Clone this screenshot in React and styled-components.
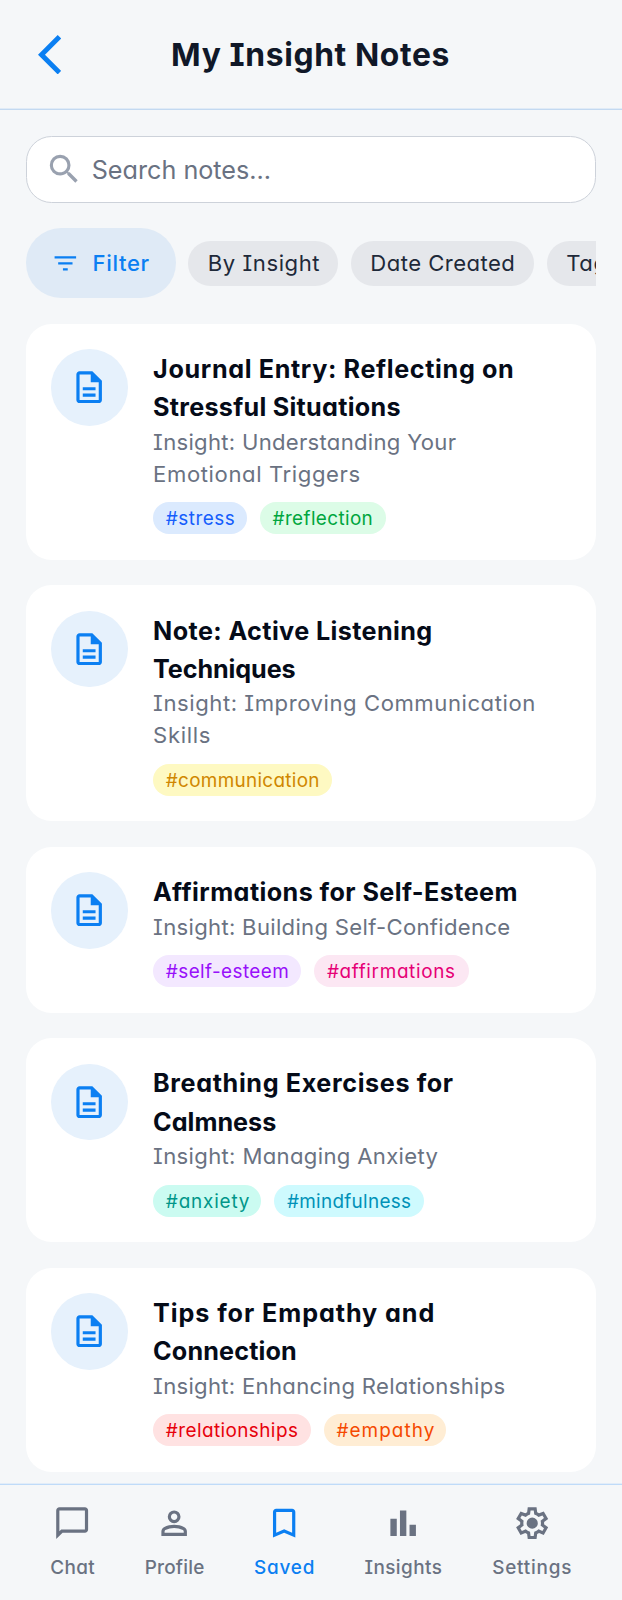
import React from "react";
import styled, { createGlobalStyle } from "styled-components";

const GlobalStyle = createGlobalStyle`
  *, *::before, *::after { box-sizing: border-box; }
  body {
    margin: 0;
    background: #f5f7f9;
    font-family: Inter, "Liberation Sans", sans-serif;
    font-feature-settings: "cv11", "cv08";
    color: #101828;
  }
  h1, h2, p { margin: 0; }
  button { font: inherit; font-feature-settings: inherit; border: 0; cursor: pointer; }
`;

const Screen = styled.div`
  display: flex;
  flex-direction: column;
  height: 1600px;
  overflow: hidden;
`;

const Header = styled.header`
  display: grid;
  grid-template-columns: 64px 1fr 64px;
  align-items: center;
  flex: none;
  height: 110px;
  padding: 0 25.6px;
  border-bottom: 1px solid #c3d9f1;
  box-shadow: inset 0 -1px #e0ebf7;
`;

const BackButton = styled.button`
  display: flex;
  padding: 0 0 0 12.4px;
  background: none;
  color: #0b7ff2;
`;

const ScreenTitle = styled.h1`
  padding-right: 1px;
  font-size: 31.8px;
  font-weight: 700;
  line-height: 40px;
  letter-spacing: 0.62px;
  text-align: center;
  white-space: nowrap;
`;

const Main = styled.main`
  flex: 1;
  min-height: 0;
  overflow: hidden;
  padding: 25.7px 26px 0;
`;

const SearchBox = styled.div`
  display: flex;
  align-items: center;
  gap: 8.6px;
  height: 67px;
  padding: 0 0 0 17.8px;
  border: 1px solid #cdd2da;
  border-radius: 25.5px;
  background: #fff;
  color: #99a1af;
`;

const SearchInput = styled.input`
  flex: 1;
  min-width: 0;
  padding: 1px 0 0;
  border: 0;
  outline: 0;
  background: none;
  font: 400 25.2px Inter, sans-serif;
  font-feature-settings: inherit;
  letter-spacing: 0px;
  color: #6a7282;
  &::placeholder { color: #6a7282; opacity: 1; }
`;

const FilterRow = styled.div`
  display: flex;
  align-items: center;
  gap: 12.75px;
  margin: 25.5px 0;
  overflow: hidden;
`;

const FilterButton = styled.button`
  display: flex;
  align-items: center;
  justify-content: flex-start;
  flex: none;
  gap: 12.9px;
  width: 149.6px;
  height: 70.2px;
  padding: 0 0 0 25px;
  border-radius: 35.1px;
  background: #dfeaf6;
  color: #0b7ff2;
  font-size: 22.1px;
  font-weight: 500;
  letter-spacing: 0.65px;
`;

const Chip = styled.button`
  flex: none;
  width: ${(p) => p.$width}px;
  height: 44.6px;
  padding: 0 0 0 19.3px;
  border-radius: 22.3px;
  background: #e5e7eb;
  color: #1e2939;
  font-size: 22.1px;
  font-weight: 400;
  letter-spacing: ${(p) => p.$track - 0.32}px;
  text-align: left;
  white-space: nowrap;
`;

const NoteList = styled.div`
  display: flex;
  flex-direction: column;
  gap: 25.5px;
`;

const Card = styled.article`
  display: flex;
  align-items: flex-start;
  flex: none;
  gap: 25.6px;
  padding: 25.5px 25px;
  border-radius: 25.5px;
  background: #fff;
`;

const IconCircle = styled.div`
  display: flex;
  align-items: center;
  justify-content: center;
  flex: none;
  width: 76.5px;
  height: 76.5px;
  border-radius: 50%;
  background: #e6f1fc;
  color: #0b7ff2;
`;

const NoteBody = styled.div`
  flex: 1;
  min-width: 0;
`;

const NoteTitle = styled.h2`
  padding-top: 0.8px;
  font-size: 25.2px;
  font-weight: 700;
  line-height: 38.28px;
  color: #050b18;
`;

const NoteInsight = styled.p`
  padding-top: 0.2px;
  font-size: 22.1px;
  line-height: 31.9px;
  color: #6a7282;
`;

const Line = styled.span`
  display: block;
  white-space: nowrap;
  letter-spacing: ${(p) => p.$track - 0.31}px;
`;

const TagRow = styled.div`
  display: flex;
  gap: 12.75px;
  margin-top: 11.75px;
`;

const tones = {
  blue: ["#dbeafe", "#155dfc"],
  green: ["#dcfce7", "#00a63e"],
  yellow: ["#fef9c2", "#d08700"],
  purple: ["#f3e8ff", "#9810fa"],
  pink: ["#fce7f3", "#e60076"],
  teal: ["#cbfbf1", "#009689"],
  cyan: ["#cefafe", "#0092b8"],
  red: ["#ffe2e2", "#e7000b"],
  orange: ["#ffedd4", "#f54900"],
};

const Tag = styled.span`
  width: ${(p) => p.$width}px;
  height: 31.9px;
  padding-left: 12.75px;
  border-radius: 16px;
  background: ${(p) => tones[p.$tone][0]};
  color: ${(p) => tones[p.$tone][1]};
  font-size: 18.9px;
  line-height: 33px;
  letter-spacing: ${(p) => p.$track - 0.36}px;
  white-space: nowrap;
`;

const NavBar = styled.nav`
  display: flex;
  align-items: flex-start;
  justify-content: space-between;
  flex: none;
  height: 116px;
  padding: 19px 49.9px 0 50px;
  border-top: 1px solid #bfdbf9;
  box-shadow: 0 -1px #e2edf9;
  background: #f5f7f9;
`;

const NavItem = styled.a`
  display: flex;
  flex-direction: column;
  align-items: center;
  gap: 13px;
  width: ${(p) => p.$width}px;
  color: ${(p) => (p.$active ? "#0b7ff2" : "#6a7282")};
`;

const NavLabel = styled.span`
  padding-left: 0.6px;
  font-size: 18.9px;
  font-weight: 500;
  line-height: 25.5px;
  letter-spacing: ${(p) => p.$track - 0.42}px;
  white-space: nowrap;
`;

const paths = {
  search: "M15.5 14h-.79l-.28-.27A6.471 6.471 0 0 0 16 9.5 6.5 6.5 0 1 0 9.5 16c1.61 0 3.09-.59 4.23-1.57l.27.28v.79l5 4.99L20.49 19l-4.99-5zm-6 0C7.01 14 5 11.99 5 9.5S7.01 5 9.5 5 14 7.01 14 9.5 11.99 14 9.5 14z",
  filter: "M10 18v-2h4v2zm-4-5v-2h12v2zM3 8V6h18v2z",
  note: "M8 18h8v-2H8zm0-4h8v-2H8zm-2 8q-.825 0-1.412-.587T4 20V4q0-.825.588-1.412T6 2h8l6 6v12q0 .825-.587 1.413T18 22zm7-13V4H6v16h12V9z",
  chat: "M2 22V4q0-.825.588-1.412T4 2h16q.825 0 1.413.588T22 4v12q0 .825-.587 1.413T20 18H6zm3.15-6H20V4H4v13.125z",
  profile: "M12 12q-1.65 0-2.825-1.175T8 8t1.175-2.825T12 4t2.825 1.175T16 8t-1.175 2.825T12 12m-8 8v-2.8q0-.85.438-1.562T5.6 14.55q1.55-.775 3.15-1.162T12 13t3.25.388t3.15 1.162q.725.375 1.163 1.088T20 17.2V20zm2-2h12v-.8q0-.275-.137-.5t-.363-.35q-1.35-.675-2.725-1.012T12 15t-2.775.338T6.5 16.35q-.225.125-.363.35T6 17.2zm6-8q.825 0 1.413-.587T14 8t-.587-1.412T12 6t-1.412.588T10 8t.588 1.413T12 10",
  saved: "M5 21V5q0-.825.588-1.412T7 3h10q.825 0 1.413.588T19 5v16l-7-3zm2-3.05l5-2.15l5 2.15V5H7z",
  insights: "M4 20V9.2h4V20zm6 0V4h4v16zm6 0v-7h4v7z",
  settings: "m9.25 22l-.4-3.2q-.325-.125-.612-.3t-.563-.375L4.7 19.375l-2.75-4.75l2.575-1.95Q4.5 12.5 4.5 12.338v-.675q0-.163.025-.338L1.95 9.375l2.75-4.75l2.975 1.25q.275-.2.575-.375t.6-.3l.4-3.2h5.5l.4 3.2q.325.125.613.3t.562.375l2.975-1.25l2.75 4.75l-2.575 1.95q.025.175.025.338v.674q0 .163-.05.338l2.575 1.95l-2.75 4.75l-2.95-1.25q-.275.2-.575.375t-.6.3l-.4 3.2zM11 20h1.975l.35-2.65q.775-.2 1.438-.587t1.212-.938l2.475 1.025l.975-1.7l-2.15-1.625q.125-.35.175-.737T17.5 12t-.05-.787t-.175-.738l2.15-1.625l-.975-1.7l-2.475 1.05q-.55-.575-1.212-.962t-1.438-.588L13 4h-1.975l-.35 2.65q-.775.2-1.437.588t-1.213.937L5.55 7.15l-.975 1.7l2.15 1.6q-.125.375-.175.75t-.05.8q0 .4.05.775t.175.75l-2.15 1.625l.975 1.7l2.475-1.05q.55.575 1.213.963t1.437.587zm1.05-4.5q1.45 0 2.475-1.025T15.55 12t-1.025-2.475T12.05 8.5q-1.475 0-2.487 1.025T8.55 12t1.013 2.475T12.05 15.5",
};

function Icon({ name, size = 38.3 }) {
  return (
    <svg width={size} height={size} viewBox="0 0 24 24" fill="currentColor" aria-hidden="true">
      <path d={paths[name]} />
    </svg>
  );
}

const notes = [
  {
    title: [["Journal Entry: Reflecting on", 0.94], ["Stressful Situations", 0.57]],
    insight: [["Insight: Understanding Your", 0.6], ["Emotional Triggers", 0.91]],
    tags: [["#stress", "blue", 94, 0.88], ["#reflection", "green", 126.1, 0.74]],
  },
  {
    title: [["Note: Active Listening", 0.7], ["Techniques", 0.2]],
    insight: [["Insight: Improving Communication", 0.87], ["Skills", 0.98]],
    tags: [["#communication", "yellow", 178.5, 0.66]],
  },
  {
    title: [["Affirmations for Self-Esteem", 0.72]],
    insight: [["Insight: Building Self-Confidence", 0.62]],
    tags: [["#self-esteem", "purple", 148.3, 0.79], ["#affirmations", "pink", 154.7, 1.03]],
  },
  {
    title: [["Breathing Exercises for", 0.92], ["Calmness", 0.3]],
    insight: [["Insight: Managing Anxiety", 0.65]],
    tags: [["#anxiety", "teal", 108.3, 1.2], ["#mindfulness", "cyan", 149.9, 0.68]],
  },
  {
    title: [["Tips for Empathy and", 1.22], ["Connection", 0.45]],
    insight: [["Insight: Enhancing Relationships", 0.61]],
    tags: [["#relationships", "red", 157.9, 0.79], ["#empathy", "orange", 122.6, 1.43]],
  },
];

const navItems = [
  { name: "chat", label: "Chat", width: 44.7, track: 0.84 },
  { name: "profile", label: "Profile", width: 60.6, track: 0.64 },
  { name: "saved", label: "Saved", width: 60.6, track: 1.24, active: true },
  { name: "insights", label: "Insights", width: 78.5, track: 0.87 },
  { name: "settings", label: "Settings", width: 80.4, track: 1.22 },
];

const renderLines = (lines) =>
  lines.map(([text, track]) => (
    <Line key={text} $track={track}>
      {text}{" "}
    </Line>
  ));

function NoteCard({ note }) {
  return (
    <Card>
      <IconCircle>
        <Icon name="note" />
      </IconCircle>
      <NoteBody>
        <NoteTitle>{renderLines(note.title)}</NoteTitle>
        <NoteInsight>{renderLines(note.insight)}</NoteInsight>
        <TagRow>
          {note.tags.map(([text, tone, width, track]) => (
            <Tag key={text} $tone={tone} $width={width} $track={track}>
              {text}
            </Tag>
          ))}
        </TagRow>
      </NoteBody>
    </Card>
  );
}

export default function App() {
  return (
    <Screen>
      <GlobalStyle />
      <Header>
        <BackButton aria-label="Back">
          <svg width="23.2" height="39.4" viewBox="0 2 11.775 20" fill="currentColor">
            <path d="M10 22L0 12L10 2l1.775 1.775L3.55 12l8.225 8.225z" />
          </svg>
        </BackButton>
        <ScreenTitle>My Insight Notes</ScreenTitle>
      </Header>
      <Main>
        <SearchBox>
          <Icon name="search" />
          <SearchInput placeholder="Search notes..." />
        </SearchBox>
        <FilterRow>
          <FilterButton>
            <Icon name="filter" size={28.7} />
            Filter
          </FilterButton>
          <Chip $width={149.9} $track={0.9}>By Insight</Chip>
          <Chip $width={183.2} $track={0.78}>Date Created</Chip>
          <Chip $width={90} $track={0.9}>Tags</Chip>
        </FilterRow>
        <NoteList>
          {notes.map((note) => (
            <NoteCard key={note.title[0][0]} note={note} />
          ))}
        </NoteList>
      </Main>
      <NavBar>
        {navItems.map((item) => (
          <NavItem key={item.name} $width={item.width} $active={item.active}>
            <Icon name={item.name} />
            <NavLabel $track={item.track}>{item.label}</NavLabel>
          </NavItem>
        ))}
      </NavBar>
    </Screen>
  );
}
